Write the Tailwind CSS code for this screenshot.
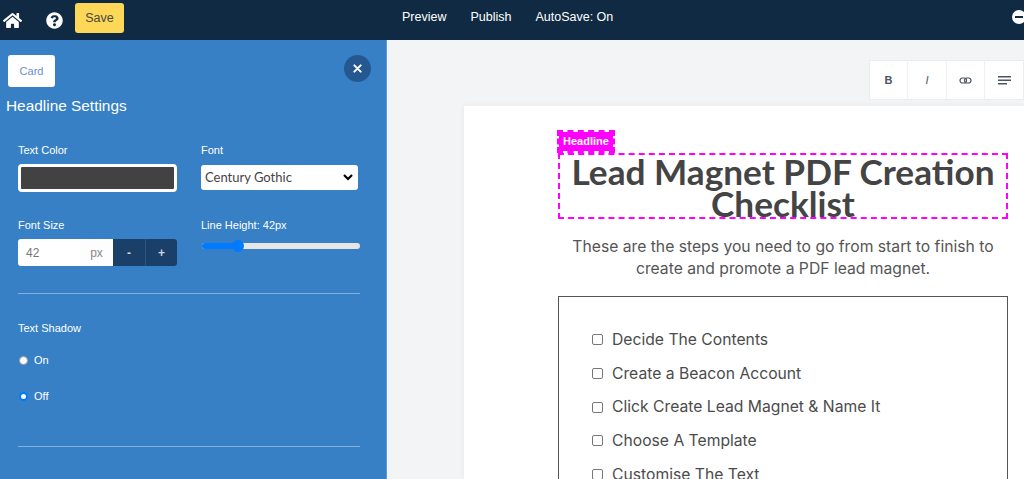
<!DOCTYPE html>
<html lang="en">
<head>
    <meta charset="UTF-8">
    <meta name="viewport" content="width=device-width, initial-scale=1.0">
    <title>Lead Magnet Editor</title>
    <script src="https://cdn.jsdelivr.net/npm/@tailwindcss/browser@4"></script>
</head>
<body class="h-[479px] w-[1024px] overflow-hidden bg-[#f3f4f6] font-['Liberation_Sans',sans-serif]">

    <!-- Top bar -->
    <header class="relative flex h-[40px] items-center bg-[#102a43] text-white">
        <svg class="ml-[3px] h-[17px] w-[19px]" viewBox="0 0 576 512" fill="currentColor">
            <path d="M280.4 148.3 96 300.1V464a16 16 0 0 0 16 16l112-.3a16 16 0 0 0 16-16V368a16 16 0 0 1 16-16h64a16 16 0 0 1 16 16v95.6a16 16 0 0 0 16 16l112 .4a16 16 0 0 0 16-16V300L295.7 148.3a12.2 12.2 0 0 0-15.3 0zM571.600 251.500 488 182.600V44a12 12 0 0 0-12-12h-56a12 12 0 0 0-12 12v72.600L318.500 43a48 48 0 0 0-61 0L4.300 251.500a12 12 0 0 0-1.600 16.900l25.500 31A12 12 0 0 0 45.200 301l235.200-193.700a12.200 12.200 0 0 1 15.300 0L530.900 301a12 12 0 0 0 16.900-1.600l25.500-31a12 12 0 0 0-1.700-16.900z"/>
        </svg>
        <svg class="ml-[24px] h-[17px] w-[17px]" viewBox="0 0 512 512" fill="currentColor">
            <path d="M504 256c0 137-111 248-248 248S8 393 8 256 119 8 256 8s248 111 248 248zM262.700 90c-54.500 0-89.300 23-116.500 63.800-3.500 5.300-2.400 12.400 2.700 16.300l34.700 26.300c5.200 3.900 12.600 3 16.700-2.100 17.900-22.700 30.100-35.800 57.300-35.800 20.400 0 45.700 13.100 45.700 33 0 15-12.400 22.700-32.600 34-23.600 13.200-54.800 29.700-54.800 70.900V300c0 6.600 5.400 12 12 12h56c6.600 0 12-5.400 12-12v-1.300c0-28.600 83.400-29.700 83.400-107 0-58.200-60.400-102.300-116.900-102.300zM256 338.900c-25.400 0-46.100 20.700-46.100 46.100 0 25.400 20.700 46.100 46.100 46.100s46.100-20.700 46.100-46.100c0-25.400-20.700-46.100-46.100-46.100z"/>
        </svg>
        <button class="mb-[4px] ml-[12px] h-[30px] w-[49px] rounded-[3px] bg-[#fcd758] text-[12.500px] text-[#4a4a3f]">Save</button>
        <nav class="mb-[5px] ml-[278px] flex gap-[24px] text-[12.500px]">
            <span>Preview</span>
            <span>Publish</span>
            <span>AutoSave: On</span>
        </nav>
        <svg class="absolute left-[1012px] top-[10px] h-[14px] w-[14px]" viewBox="0 0 14 14">
            <circle cx="7" cy="7" r="7" fill="#fff"/>
            <rect x="3" y="6" width="8" height="2" fill="#102a43"/>
        </svg>
    </header>

    <div class="flex h-[439px]">
        <!-- Settings panel -->
        <aside class="w-[387px] shrink-0 border-r border-[#5a9ad6] bg-[#3780c6] text-white">
            <div class="flex justify-between pl-[8px] pr-[15px] pt-[15px]">
                <button class="h-[32px] w-[47px] rounded-[3px] bg-white text-[11px] text-[#6b8fd0]">Card</button>
                <button class="flex h-[27px] w-[27px] items-center justify-center rounded-full bg-[#24588e]">
                    <svg class="h-[9px] w-[9px]" viewBox="0 0 10 10" stroke="#fff" stroke-width="2.200" stroke-linecap="round">
                        <path d="M1.500 1.500l7 7M8.500 1.500l-7 7"/>
                    </svg>
                </button>
            </div>
            <h2 class="ml-[6px] mt-[10px] text-[15.400px] leading-[18px]">Headline Settings</h2>

            <div class="mx-[18px] mt-[29px] w-[342px]">
                <div class="grid grid-cols-[159px_157px] gap-x-[24px]">
                    <div>
                        <label class="block text-[11px] leading-[13px]">Text Color</label>
                        <div class="mt-[7px] h-[28px] rounded-[4px] border-[3px] border-white bg-[#424242]"></div>
                    </div>
                    <div>
                        <label class="block text-[11px] leading-[13px]">Font</label>
                        <div class="mt-[8px] flex h-[25px] items-center justify-between rounded-[3px] bg-white pl-[4px] pr-[5px] font-['Lato',sans-serif] text-[13px] text-[#444]">
                            <span>Century Gothic</span>
                            <svg class="h-[7px] w-[10px]" viewBox="0 0 10 7" fill="none" stroke="#000" stroke-width="2.200">
                                <path d="M1 1l4 4 4-4"/>
                            </svg>
                        </div>
                    </div>
                </div>

                <div class="mt-[27px] grid grid-cols-[159px_157px] gap-x-[24px]">
                    <div>
                        <label class="block text-[11px] leading-[13px]">Font Size</label>
                        <div class="mt-[7px] flex h-[27px] overflow-hidden rounded-[3px] text-[12px]">
                            <div class="flex w-[62px] items-center bg-white pl-[8px] text-[#777]">42</div>
                            <div class="flex w-[33px] items-center justify-center bg-[#fdfdfd] text-[#888]">px</div>
                            <div class="flex w-[32px] items-center justify-center bg-[#1a3f68] font-bold text-[#cbd5e1]">-</div>
                            <div class="flex w-[32px] items-center justify-center border-l border-[#2a5583] bg-[#1a3f68] font-bold text-[#cbd5e1]">+</div>
                        </div>
                    </div>
                    <div>
                        <label class="block text-[11px] leading-[13px]">Line Height: 42px</label>
                        <div class="relative ml-[1px] mt-[11px] h-[6px] w-[158px] rounded-full bg-[#e6e6e6]">
                            <div class="h-[6px] w-[36px] rounded-full bg-[#007bff]"></div>
                            <div class="absolute left-[30px] top-[-3px] h-[12px] w-[12px] rounded-full bg-[#007bff]"></div>
                        </div>
                    </div>
                </div>

                <hr class="mt-[27px] border-t border-[#7fb0e0]">

                <label class="mt-[28px] block text-[11px] leading-[13px]">Text Shadow</label>
                <div class="mt-[19px] flex items-center gap-[6px] text-[11px] leading-[13px]">
                    <span class="ml-[1px] h-[9px] w-[9px] rounded-full border border-[#999] bg-white"></span>
                    <span>On</span>
                </div>
                <div class="mt-[23px] flex items-center gap-[6px] text-[11px] leading-[13px]">
                    <span class="ml-[1px] h-[9px] w-[9px] rounded-full border-2 border-[#007bff] bg-white"></span>
                    <span>Off</span>
                </div>
                <hr class="mt-[43px] border-t border-[#7fb0e0]">
            </div>
        </aside>

        <!-- Canvas -->
        <main class="flex-1 overflow-hidden">
            <div class="flex justify-end pt-[20px]">
                <div class="flex h-[40px] w-[155px] border border-[#ececec] bg-white text-[11px] text-[#4b5563]">
                    <button class="flex w-[38px] items-center justify-center border-r border-[#f0f0f0] font-bold">B</button>
                    <button class="flex w-[39px] items-center justify-center border-r border-[#f0f0f0] italic">I</button>
                    <button class="flex w-[38px] items-center justify-center border-r border-[#f0f0f0]">
                        <svg class="h-[7px] w-[13px]" viewBox="0 0 13 7" fill="none" stroke="#4b5563" stroke-width="1.200">
                            <rect x="1" y="1" width="6.500" height="5" rx="2.500"/>
                            <rect x="5.500" y="1" width="6.500" height="5" rx="2.500"/>
                        </svg>
                    </button>
                    <button class="flex flex-1 items-center justify-center">
                        <svg class="h-[9px] w-[13px]" viewBox="0 0 13 9" fill="#4b5563">
                            <rect width="13" height="1.500"/>
                            <rect y="3.500" width="13" height="1.500"/>
                            <rect y="7" width="9" height="1.500"/>
                        </svg>
                    </button>
                </div>
            </div>

            <div class="ml-[77px] mt-[6px] h-[400px] w-[560px] bg-white pt-[47px] shadow-[0_0_6px_rgba(0,0,0,0.06)]">
                <div class="relative ml-[94px] w-[450px]">
                    <span class="absolute left-[-1px] top-[-23px] h-[23px] w-[58px] border-2 border-dashed border-[#ff00ff] bg-[#ff00ff] bg-clip-padding text-center text-[11px] font-bold leading-[19px] text-white">Headline</span>
                    <h1 class="h-[66px] whitespace-nowrap border-2 border-dashed border-[#ff00ff] text-center font-['Lato',sans-serif] text-[35.200px] font-bold leading-[32px] text-[#444]">Lead Magnet PDF Creation<br>Checklist</h1>
                    <p class="mt-[17px] text-center font-['Inter',sans-serif] text-[15.700px] leading-[22px] text-[#555]">These are the steps you need to go from start to finish to<br>create and promote a PDF lead magnet.</p>
                    <ul class="mt-[16px] h-[300px] border border-[#555] pl-[33px] pt-[26px] font-['Inter',sans-serif] text-[15.700px] text-[#4b4b4b]">
                        <li class="flex h-[33.700px] items-center gap-[9px]"><span class="h-[11px] w-[11px] rounded-[2px] border border-[#777]"></span>Decide The Contents</li>
                        <li class="flex h-[33.700px] items-center gap-[9px]"><span class="h-[11px] w-[11px] rounded-[2px] border border-[#777]"></span>Create a Beacon Account</li>
                        <li class="flex h-[33.700px] items-center gap-[9px]"><span class="h-[11px] w-[11px] rounded-[2px] border border-[#777]"></span>Click Create Lead Magnet &amp; Name It</li>
                        <li class="flex h-[33.700px] items-center gap-[9px]"><span class="h-[11px] w-[11px] rounded-[2px] border border-[#777]"></span>Choose A Template</li>
                        <li class="flex h-[33.700px] items-center gap-[9px]"><span class="h-[11px] w-[11px] rounded-[2px] border border-[#777]"></span>Customise The Text</li>
                    </ul>
                </div>
            </div>
        </main>
    </div>

</body>
</html>
